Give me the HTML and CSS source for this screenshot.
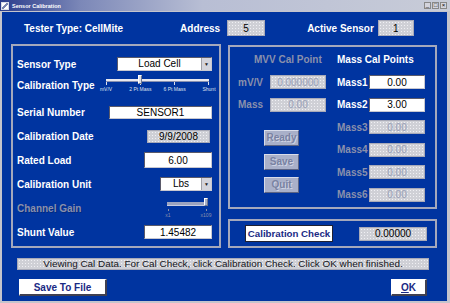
FILE: index.html
```html
<!DOCTYPE html>
<html lang="en">
<head>
  <meta charset="UTF-8" />
  <title>Sensor Calibration</title>
  <link rel="stylesheet" href="styles.css">
</head>
<body>
  <div class="window">
    <div class="titlebar">
      <span class="app-icon"></span>
      <span class="title">Sensor Calibration</span>
      <div class="controls">
        <span class="ctl">_</span><span class="ctl">□</span><span class="ctl">×</span>
      </div>
    </div>

    <div class="client">
      <div class="header">
        <span class="tester">Tester Type: CellMite</span>
        <span class="address">Address</span>
        <span class="box dim addr-box">5</span>
        <span class="active">Active Sensor</span>
        <span class="box dim active-box">1</span>
      </div>

      <div class="main">
        <div class="panel left">
          <div class="row">
            <span class="label">Sensor Type</span>
            <div class="select w95"><span class="sel-text">Load Cell</span><span class="arrow">▼</span></div>
          </div>
          <div class="row">
            <span class="label up">Calibration Type</span>
            <div class="slider type-slider">
              <div class="track"><span class="thumb"></span></div>
              <div class="stops">
                <span class="stop">mV/V</span>
                <span class="stop">2 Pt Mass</span>
                <span class="stop">6 Pt Mass</span>
                <span class="stop">Shunt</span>
              </div>
            </div>
          </div>
          <div class="row">
            <span class="label">Serial Number</span>
            <span class="box input serial">SENSOR1</span>
          </div>
          <div class="row">
            <span class="label">Calibration Date</span>
            <span class="box dim date">9/9/2008</span>
          </div>
          <div class="row">
            <span class="label">Rated Load</span>
            <span class="box input num tall">6.00</span>
          </div>
          <div class="row">
            <span class="label">Calibration Unit</span>
            <div class="select w52"><span class="sel-text">Lbs</span><span class="arrow">▼</span></div>
          </div>
          <div class="row">
            <span class="label off">Channel Gain</span>
            <div class="slider gain-slider">
              <div class="track"><span class="thumb"></span></div>
              <div class="stops">
                <span class="stop">x1</span>
                <span class="stop">x109</span>
              </div>
            </div>
          </div>
          <div class="row">
            <span class="label">Shunt Value</span>
            <span class="box input num">1.45482</span>
          </div>
        </div>

        <div class="right-col">
          <div class="panel mass">
            <div class="mvv">
              <div class="col-head off mvv-head">MVV Cal Point</div>
              <div class="mrow"><span class="mlabel off">mV/V</span><span class="box dim cal">0.000000</span></div>
              <div class="mrow"><span class="mlabel off">Mass</span><span class="box dim cal">0.00</span></div>
              <div class="btns">
                <span class="btn-off">Ready</span>
                <span class="btn-off">Save</span>
                <span class="btn-off">Quit</span>
              </div>
            </div>
            <div class="masses">
              <div class="col-head">Mass Cal Points</div>
              <div class="mrow"><span class="mlabel">Mass1</span><span class="box input cal">0.00</span></div>
              <div class="mrow"><span class="mlabel">Mass2</span><span class="box input cal">3.00</span></div>
              <div class="mrow"><span class="mlabel off">Mass3</span><span class="box dim cal">0.00</span></div>
              <div class="mrow"><span class="mlabel off">Mass4</span><span class="box dim cal">0.00</span></div>
              <div class="mrow"><span class="mlabel off">Mass5</span><span class="box dim cal">0.00</span></div>
              <div class="mrow"><span class="mlabel off">Mass6</span><span class="box dim cal">0.00</span></div>
            </div>
          </div>
          <div class="panel check">
            <span class="btn check-btn">Calibration Check</span>
            <span class="box dim check-val">0.00000</span>
          </div>
        </div>
      </div>

      <div class="status">Viewing Cal Data. For Cal Check, click Calibration Check. Click OK when finished.</div>

      <div class="footer">
        <span class="btn save-btn">Save To File</span>
        <span class="btn ok-btn"><u>O</u>K</span>
      </div>
    </div>
  </div>
</body>
</html>
```

FILE: styles.css
```css
body {
  margin: 0;
  width: 450px;
  height: 303px;
  overflow: hidden;
  font-family: 'Liberation Sans', Arial, sans-serif;
}
.window {
  width: 450px;
  height: 303px;
  box-sizing: border-box;
  background: #0034a0;
  border-left: 2px solid #c4c4cc;
  border-right: 3px solid #c4c4cc;
  border-bottom: 2px solid #c4c4cc;
  display: flex;
  flex-direction: column;
}
.titlebar {
  height: 11px;
  margin-left: -2px;
  margin-right: -3px;
  display: flex;
  align-items: center;
  background: linear-gradient(90deg, #2a3c8c 0%, #7c88b8 18%, #b8bed4 45%, #c8ccd8 100%);
  border-bottom: 1px solid #c4c4cc;
}
.app-icon {
  width: 8px;
  height: 8px;
  margin-left: 1px;
  background: linear-gradient(135deg, #fff 0 40%, #7a86b0 40% 60%, #fff 60%);
  border: 1px solid #d8dce8;
  box-sizing: border-box;
}
.title {
  margin-left: 3px;
  font-size: 5.5px;
  font-weight: bold;
  color: #fff;
}
.controls {
  margin-left: auto;
  margin-right: 3px;
  display: flex;
  gap: 1px;
}
.ctl {
  width: 7px;
  height: 7px;
  box-sizing: border-box;
  background: #d4d4dc;
  border: 1px solid #888;
  font-size: 6px;
  line-height: 5px;
  text-align: center;
  color: #000;
}
.client {
  flex: 1;
  display: flex;
  flex-direction: column;
}

/* header line */
.header {
  height: 32px;
  display: flex;
  align-items: center;
  padding-left: 22px;
  font-size: 10px;
  font-weight: bold;
  color: #fff;
}
.address { margin-left: 57px; }
.active { margin-left: 42px; }
.addr-box { margin-left: 7px; width: 38px; height: 16px; }
.active-box { margin-left: 4px; width: 36px; height: 16px; }

/* value boxes */
.box {
  box-sizing: border-box;
  display: flex;
  align-items: center;
  justify-content: center;
  font-size: 10px;
  font-weight: normal;
  color: #000;
}
.input {
  background: #fff;
  border: 1px solid #5a5a6a;
  border-right-color: #c8c8d0;
  border-bottom-color: #c8c8d0;
}
.dim {
  background-color: #cfd0d6;
  background-image: radial-gradient(#f0f0f4 0.6px, transparent 0.8px);
  background-size: 3px 3px;
  border: 1px solid #a8aab8;
}
.serial { width: 103px; height: 13px; }
.date { width: 63px; height: 13px; margin-right: 2px; }
.num { width: 68px; height: 14px; }
.num.tall { height: 16px; }

/* panels */
.main {
  display: flex;
  padding-left: 9px;
  gap: 7px;
}
.panel {
  box-sizing: border-box;
  border: 2px solid #a4a8bc;
}
.left {
  width: 210px;
  height: 204px;
  padding: 6px 7px 0 4px;
}
.row {
  height: 24px;
  display: flex;
  align-items: center;
  justify-content: space-between;
}
.label {
  font-size: 10px;
  font-weight: bold;
  color: #fff;
  white-space: nowrap;
}
.label.up { margin-top: -6px; }
.off { color: #8a90ac; }
.label.off { text-shadow: 1px 1px 0 #002a80; }

/* dropdowns */
.select {
  box-sizing: border-box;
  height: 14px;
  display: flex;
  background: #fff;
  border: 1px solid #5a5a6a;
  border-right-color: #c8c8d0;
  border-bottom-color: #c8c8d0;
}
.w95 { width: 95px; }
.w52 { width: 52px; }
.sel-text {
  flex: 1;
  text-align: center;
  font-size: 10px;
  line-height: 12px;
  color: #000;
}
.arrow {
  width: 9px;
  background: #d4d4dc;
  border-left: 1px solid #a0a0a8;
  font-size: 5px;
  line-height: 12px;
  text-align: center;
  color: #222;
}

/* sliders */
.slider {
  height: 24px;
  box-sizing: border-box;
}
.type-slider {
  width: 115px;
  margin-right: -3px;
  padding-top: 3px;
}
.type-slider .track { margin: 0 6px; }
.type-slider .stops { margin: 0 6px; }
.track {
  position: relative;
  height: 2px;
  background: #e8e8f0;
  border-bottom: 1px solid #8890b0;
}
.thumb {
  position: absolute;
  left: 32px;
  top: -4px;
  width: 4px;
  height: 9px;
  box-sizing: border-box;
  background: #e0e0e8;
  border: 1px solid #fff;
  border-right-color: #707890;
  border-bottom-color: #707890;
}
.stops {
  display: flex;
  justify-content: space-between;
  margin-top: 1px;
}
.stop {
  width: 0;
  display: flex;
  flex-direction: column;
  align-items: center;
  white-space: nowrap;
  font-size: 5px;
  color: #dde0ee;
}
.stop::before {
  content: '';
  width: 1px;
  height: 3px;
  margin-bottom: 1px;
  background: #dde0ee;
}
.gain-slider {
  width: 47px;
  padding-top: 6px;
}
.gain-slider .track {
  margin: 0 5px 0 2px;
  height: 3px;
  background: #9ca4c0;
  border-bottom: 1px solid #c8cce0;
}
.gain-slider .thumb {
  left: auto;
  right: -1px;
  top: -4px;
  height: 8px;
  background: #a8b0c8;
}
.gain-slider .stops { margin: 3px 6px 0 3px; }
.gain-slider .stop { color: #8a90ac; }
.gain-slider .stop::before { background: #8a90ac; height: 2px; }

/* mass calibration panel */
.right-col {
  display: flex;
  flex-direction: column;
  gap: 10px;
  padding-top: 1px;
}
.mass {
  width: 209px;
  height: 164px;
  display: flex;
  padding: 2px 0 0 8px;
}
.mvv { width: 92px; }
.masses { margin-left: 7px; }
.col-head {
  height: 22px;
  line-height: 22px;
  font-size: 10px;
  font-weight: bold;
  color: #fff;
  white-space: nowrap;
}
.col-head.off { color: #8a90ac; }
.mvv-head { padding-left: 16px; }
.mrow {
  height: 22.5px;
  display: flex;
  align-items: center;
}
.mlabel {
  width: 32px;
  font-size: 10px;
  font-weight: bold;
  color: #fff;
}
.mlabel.off { color: #8a90ac; }
.cal { width: 56px; height: 14px; }
.dim.cal { color: #9aa0b8; }
.btns {
  display: flex;
  flex-direction: column;
  gap: 7.5px;
  margin: 14px 0 0 26px;
}
.btn-off {
  width: 35px;
  height: 16px;
  box-sizing: border-box;
  background: #a9b0c9;
  border: 1px solid #d8dcea;
  border-right-color: #5c6484;
  border-bottom-color: #5c6484;
  font-size: 10px;
  font-weight: bold;
  color: #7a82a2;
  text-align: center;
  line-height: 14px;
  text-shadow: 1px 1px 0 #d0d4e4;
}

/* calibration check */
.check {
  width: 209px;
  height: 29px;
  display: flex;
  align-items: center;
  padding-left: 15px;
}
.btn {
  box-sizing: border-box;
  display: flex;
  align-items: center;
  justify-content: center;
  background: #fff;
  border: 1px solid #fff;
  border-right: 2px solid #404050;
  border-bottom: 2px solid #404050;
  font-size: 10px;
  font-weight: bold;
  color: #1a2a84;
  white-space: nowrap;
}
.check-btn {
  width: 88px;
  height: 17px;
  font-size: 9.7px;
  border: 1px solid #202030;
}
.check-val { margin-left: 26px; width: 68px; height: 14px; }

/* status and buttons */
.status {
  margin: 10px 0 0 15px;
  width: 412px;
  height: 12px;
  box-sizing: border-box;
  background-color: #cfd0d6;
  background-image: radial-gradient(#f0f0f4 0.6px, transparent 0.8px);
  background-size: 3px 3px;
  border: 1px solid #a8aab8;
  font-size: 9.9px;
  line-height: 10px;
  text-align: center;
  color: #141420;
}
.footer {
  display: flex;
  justify-content: space-between;
  margin: 9px 20px 0 17px;
}
.save-btn { width: 88px; height: 17px; }
.ok-btn { width: 36px; height: 17px; }
.ok-btn u { text-decoration: underline; }
```
